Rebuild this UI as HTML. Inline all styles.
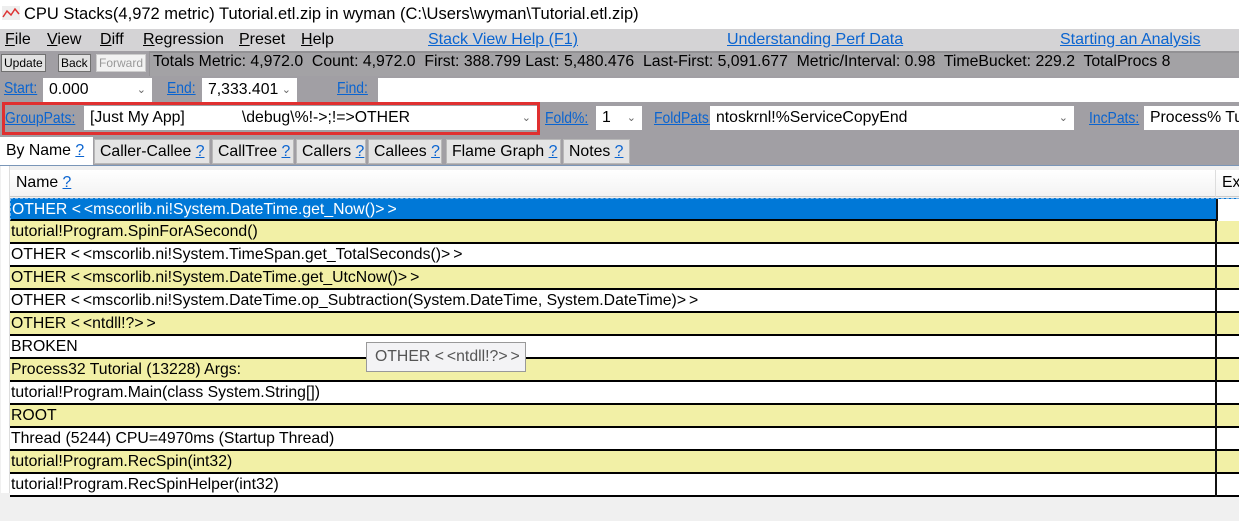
<!DOCTYPE html>
<html><head><meta charset="utf-8"><style>
*{margin:0;padding:0;box-sizing:border-box}
body{width:1239px;height:521px;overflow:hidden;background:#a19fa4;font-family:"Liberation Sans","Noto Sans CJK SC",sans-serif;font-size:15.8px;color:#000;position:relative}
.a{position:absolute;white-space:nowrap}
.lnk{color:#0a64d0;text-decoration:underline}
.sq{display:inline-block;transform:scaleX(0.88);transform-origin:left;color:#0a64d0;text-decoration:underline}
.box{position:absolute;background:#fff;height:24px;line-height:24px;padding-left:6px;font-size:15.8px;white-space:nowrap;overflow:hidden}
.dd{position:absolute;right:6px;top:0;color:#666;font-size:11px}
.btn{position:absolute;top:54px;height:18px;border:1px solid #707070;background:#e1e1e1;font-size:12px;line-height:16px;padding:0 2px}
.tab{position:absolute;top:139px;height:25px;background:#e4e4e4;border:1px solid #b8b8b8;line-height:23px;padding-left:5px;white-space:nowrap}
.row{position:absolute;left:10px;width:1229px;height:23px;line-height:22px;padding-left:1px;border-bottom:2px solid #000;white-space:nowrap}
.y{background:#f2f0a6}.w{background:#fff}
.row .c{position:absolute;left:1205px;top:0;bottom:-2px;border-left:2px solid #111}
.m{top:31px;font-size:16px}
.g{letter-spacing:3px}
</style></head><body>
<div class="a" style="left:0;top:0;width:1239px;height:29px;background:#fff"></div>
<svg class="a" style="left:2px;top:6px" width="18" height="14"><rect x="0" y="0" width="18" height="14" fill="#eee"/><polyline points="1,11 5,5 9,9 13,3 17,8" fill="none" stroke="#d33" stroke-width="1.5"/></svg>
<div class="a" style="left:24px;top:5px;font-size:16.5px">CPU Stacks(4,972 metric) Tutorial.etl.zip in wyman (C:\Users\wyman\Tutorial.etl.zip)</div>
<div class="a" style="left:0;top:29px;width:1239px;height:22px;background:#d4d3d5"></div>
<div class="a m" style="left:5px"><u>F</u>ile</div>
<div class="a m" style="left:47px"><u>V</u>iew</div>
<div class="a m" style="left:100px"><u>D</u>iff</div>
<div class="a m" style="left:143px"><u>R</u>egression</div>
<div class="a m" style="left:239px"><u>P</u>reset</div>
<div class="a m" style="left:301px"><u>H</u>elp</div>
<div class="a lnk m" style="left:428px">Stack View Help (F1)</div>
<div class="a lnk m" style="left:727px">Understanding Perf Data</div>
<div class="a lnk m" style="left:1060px">Starting an Analysis</div>
<div class="btn" style="left:1px">Update</div>
<div class="btn" style="left:58px">Back</div>
<div class="btn" style="left:96px;background:#f2f2f2;color:#999;border-color:#ccc">Forward</div>
<div class="a" style="left:149px;top:51px;width:1090px;height:25px;background:#a3a2a5;border-top:2px solid #929194;border-left:1px solid #929194"></div>
<div class="a" style="left:153px;top:53px;font-size:15.8px">Totals Metric: 4,972.0&nbsp; Count: 4,972.0&nbsp; First: 388.799 Last: 5,480.476&nbsp; Last-First: 5,091.677&nbsp; Metric/Interval: 0.98&nbsp; TimeBucket: 229.2&nbsp; TotalProcs 8</div>
<div class="a" style="left:4px;top:80px"><span class="sq">Start:</span></div>
<div class="box" style="left:43px;top:78px;width:109px">0.000<span class="dd">&#8964;</span></div>
<div class="a" style="left:167px;top:80px"><span class="sq">End:</span></div>
<div class="box" style="left:202px;top:78px;width:95px">7,333.401<span class="dd">&#8964;</span></div>
<div class="a" style="left:337px;top:80px"><span class="sq">Find:</span></div>
<div class="box" style="left:378px;top:78px;width:861px"></div>
<div class="a" style="left:2px;top:102px;width:538px;height:33px;border:3px solid #e03030"></div>
<div class="a" style="left:5px;top:110px"><span class="sq">GroupPats:</span></div>
<div class="box" style="left:84px;top:106px;width:453px">[Just My App]&nbsp;&nbsp;&nbsp;&nbsp;&nbsp;&nbsp;&nbsp;&nbsp;&nbsp;&nbsp;&nbsp;&nbsp; \debug\%!-&gt;;!=&gt;OTHER<span class="dd">&#8964;</span></div>
<div class="a" style="left:545px;top:110px"><span class="sq">Fold%:</span></div>
<div class="box" style="left:596px;top:106px;width:46px">1<span class="dd">&#8964;</span></div>
<div class="a" style="left:654px;top:110px"><span class="sq">FoldPats:</span></div>
<div class="box" style="left:710px;top:106px;width:364px">ntoskrnl!%ServiceCopyEnd<span class="dd">&#8964;</span></div>
<div class="a" style="left:1089px;top:110px"><span class="sq">IncPats:</span></div>
<div class="box" style="left:1144px;top:106px;width:95px">Process% Tu</div>
<div class="a" style="left:0;top:137px;width:93px;height:28px;background:#fff;line-height:27px;padding-left:6px">By Name <span class="lnk">?</span></div>
<div class="tab" style="left:94px;width:116px">Caller-Callee <span class="lnk">?</span></div>
<div class="tab" style="left:212px;width:82px">CallTree <span class="lnk">?</span></div>
<div class="tab" style="left:296px;width:70px">Callers <span class="lnk">?</span></div>
<div class="tab" style="left:368px;width:74px">Callees <span class="lnk">?</span></div>
<div class="tab" style="left:446px;width:115px">Flame Graph <span class="lnk">?</span></div>
<div class="tab" style="left:563px;width:67px">Notes <span class="lnk">?</span></div>
<div class="a" style="left:0;top:165px;width:1239px;height:356px;background:#f0f0f0;border-top:1px solid #7a96b8"></div>
<div class="a" style="left:1px;top:166px;width:9px;height:327px;background:#fff;border-right:1px solid #ddd"></div>
<div class="a" style="left:10px;top:170px;width:1229px;height:27px;background:linear-gradient(#fff,#f3f3f3);border-bottom:1px solid #ccc"></div>
<div class="a" style="left:16px;top:174px">Name <span class="lnk">?</span></div>
<div class="a" style="left:1215px;top:170px;height:27px;border-left:1px solid #ddd;padding-left:6px;line-height:26px">Exc</div>
<div class="row" style="top:198px;background:#0078d7;color:#fff;border:1px dashed #7fb4e6;border-bottom:2px solid #000">OTHER <span class="g">&lt;</span>&lt;mscorlib.ni!System.DateTime.get_Now()<span class="g">&gt;</span>&gt;<div class="c" style="background:#fff;width:24px"></div></div>
<div class="row y" style="top:221px">tutorial!Program.SpinForASecond()<div class="c"></div></div>
<div class="row w" style="top:244px">OTHER <span class="g">&lt;</span>&lt;mscorlib.ni!System.TimeSpan.get_TotalSeconds()<span class="g">&gt;</span>&gt;<div class="c"></div></div>
<div class="row y" style="top:267px">OTHER <span class="g">&lt;</span>&lt;mscorlib.ni!System.DateTime.get_UtcNow()<span class="g">&gt;</span>&gt;<div class="c"></div></div>
<div class="row w" style="top:290px">OTHER <span class="g">&lt;</span>&lt;mscorlib.ni!System.DateTime.op_Subtraction(System.DateTime, System.DateTime)<span class="g">&gt;</span>&gt;<div class="c"></div></div>
<div class="row y" style="top:313px">OTHER <span class="g">&lt;</span>&lt;ntdll!?<span class="g">&gt;</span>&gt;<div class="c"></div></div>
<div class="row w" style="top:336px">BROKEN<div class="c"></div></div>
<div class="row y" style="top:359px">Process32 Tutorial (13228) Args:<div class="c"></div></div>
<div class="row w" style="top:382px">tutorial!Program.Main(class System.String[])<div class="c"></div></div>
<div class="row y" style="top:405px">ROOT<div class="c"></div></div>
<div class="row w" style="top:428px">Thread (5244) CPU=4970ms (Startup Thread)<div class="c"></div></div>
<div class="row y" style="top:451px">tutorial!Program.RecSpin(int32)<div class="c"></div></div>
<div class="row w" style="top:474px">tutorial!Program.RecSpinHelper(int32)<div class="c"></div></div>
<div class="a" style="left:366px;top:342px;width:160px;height:30px;background:#f3f3f5;border:1px solid #999;color:#555;line-height:28px;padding-left:8px">OTHER <span class="g">&lt;</span>&lt;ntdll!?<span class="g">&gt;</span>&gt;</div>
</body></html>
